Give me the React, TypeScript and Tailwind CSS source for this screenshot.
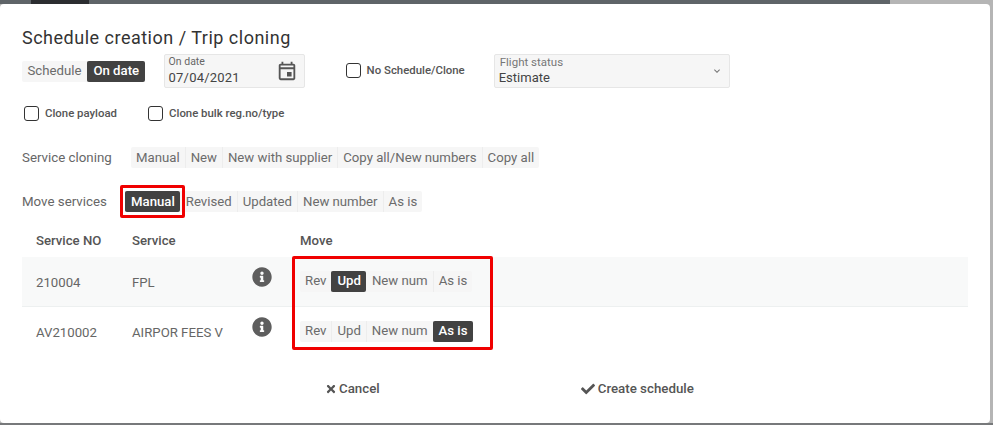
import { FaCheck, FaInfoCircle, FaTimes } from 'react-icons/fa'
import { MdKeyboardArrowDown, MdOutlineEvent } from 'react-icons/md'

type Option = { label: string; active?: boolean; marked?: boolean }

function Segments({ options, className = '', wide }: { options: Option[]; className?: string; wide?: boolean }) {
  return (
    <div className={`flex h-[21px] bg-[#f6f6f6] rounded-[2px] text-[13.2px] text-[#6b6b6b] ${className}`}>
      {options.map((o, i) => (
        <span
          key={o.label}
          className={`relative flex items-center ${wide ? 'px-[5.5px]' : 'px-[5px]'} ${
            o.active
              ? 'border-l bg-[#424242] border-[#424242] text-white font-medium rounded-[2px]'
              : i === 0
                ? ''
                : !options[i - 1].active
                  ? 'border-l border-[#ededed]'
                  : 'border-l border-transparent'
          }`}
        >
          {o.label}
          {o.marked && (
            <span className="absolute left-[-6px] right-[-5px] top-[-6px] bottom-[-6px] border-[3px] border-[#f00000] rounded-[2px]" />
          )}
        </span>
      ))}
    </div>
  )
}

function Check({ label, className = '' }: { label: string; className?: string }) {
  return (
    <label className={`flex items-center gap-[6px] text-[11.4px] font-medium text-[#555] ${className}`}>
      <span className="w-[15px] h-[15px] border border-[#333] rounded-[3px] bg-white" />
      {label}
    </label>
  )
}

const moveOptions = ['Rev', 'Upd', 'New num', 'As is']

const rows = [
  { no: '210004', name: 'FPL', move: 'Upd', tint: 'bg-[#f8f9f9] shadow-[inset_0_-1px_0_#edf0f0]' },
  { no: 'AV210002', name: 'AIRPOR FEES V', move: 'As is', tint: '' },
]

export default function App() {
  return (
    <div
      className="w-[993px] h-[425px] overflow-hidden bg-[#b5b5b5] flex flex-col"
      style={{ fontFamily: 'Roboto, sans-serif' }}
    >
      <div className="h-[4px] flex">
        <div className="w-[31px] bg-[#5f6468]" />
        <div className="w-[58px] bg-[#2b2d30]" />
        <div className="w-[801px] bg-[#5f6468]" />
      </div>
      <div className="w-[990px] h-[419px] bg-white rounded-[4px] pl-[22px] pr-[22px] pt-[23px]">
        <h1 className="text-[18px] leading-[22px] text-[#333] tracking-[0.5px] h-[27px]">
          Schedule creation / Trip cloning
        </h1>

        <div className="flex items-center h-[34px]">
          <Segments
            wide
            options={[{ label: 'Schedule' }, { label: 'On date', active: true }]}
          />
          <div className="ml-[19px] w-[141px] h-[34px] bg-[#f6f6f6] border border-[#e6e6e6] rounded-[2px] flex items-center justify-between pl-[4px] pr-[6px]">
            <div className="flex flex-col">
              <span className="text-[10.5px] leading-[11px] text-[#666]">On date</span>
              <span className="text-[13px] leading-[17px] mt-[2px] tracking-[0.2px] text-[#444]">07/04/2021</span>
            </div>
            <MdOutlineEvent className="text-[#555]" size={22} />
          </div>
          <Check label="No Schedule/Clone" className="ml-[41px]" />
          <div className="ml-[29px] w-[236px] h-[34px] bg-[#f6f6f6] border border-[#e6e6e6] rounded-[2px] flex items-center justify-between pl-[4px] pr-[6px]">
            <div className="flex flex-col">
              <span className="text-[11.5px] leading-[12px] text-[#777] ml-[1px]">Flight status</span>
              <span className="text-[13px] leading-[17px] mt-[1px] text-[#444]">Estimate</span>
            </div>
            <MdKeyboardArrowDown className="text-[#777]" size={12} />
          </div>
        </div>

        <div className="flex mt-[18px] h-[15px] pl-[2px]">
          <Check label="Clone payload" />
          <Check label="Clone bulk reg.no/type" className="ml-[31px]" />
        </div>

        <div className="flex items-center mt-[26px] text-[13.3px] text-[#666]">
          <span className="w-[109px]">Service cloning</span>
          <Segments
            options={[
              { label: 'Manual' },
              { label: 'New' },
              { label: 'New with supplier' },
              { label: 'Copy all/New numbers' },
              { label: 'Copy all' },
            ]}
          />
        </div>

        <div className="flex items-center mt-[23px] text-[13.3px] text-[#666]">
          <span className="w-[103px]">Move services</span>
          <Segments
            options={[
              { label: 'Manual', active: true, marked: true },
              { label: 'Revised' },
              { label: 'Updated' },
              { label: 'New number' },
              { label: 'As is' },
            ]}
          />
        </div>

        <div className="w-[946px] mt-[13px]">
          <div className="grid grid-cols-[96px_168px_1fr] pl-[14px] h-[32px] items-center text-[13.2px] font-medium text-[#555]">
            <span>Service NO</span>
            <span>Service</span>
            <span>Move</span>
          </div>
          <div className="relative">
            {rows.map((r) => (
              <div
                key={r.no}
                className={`grid grid-cols-[96px_120px_48px_1fr] pl-[14px] h-[50px] items-center text-[13.2px] text-[#666] ${r.tint}`}
              >
                <span className="mt-[2px]">{r.no}</span>
                <span className="mt-[2px]">{r.name}</span>
                <FaInfoCircle className="text-[#5e5e5e] mb-[10px]" size={20} />
                <Segments
                  className="w-fit mb-[2px]"
                  options={moveOptions.map((m) => ({ label: m, active: m === r.move }))}
                />
              </div>
            ))}
            <div className="absolute left-[270px] top-[-1px] w-[201px] h-[94px] border-[3px] border-[#f00000] rounded-[2px]" />
          </div>
        </div>

        <div className="flex text-[13.3px] font-medium text-[#555] mt-[22px]">
          <span className="ml-[303px] flex items-center gap-[2px]">
            <FaTimes size={12} />
            Cancel
          </span>
          <span className="ml-[201px] flex items-center gap-[3px]">
            <FaCheck size={14} />
            Create schedule
          </span>
        </div>
      </div>
      <div className="h-[2px] bg-[#77797b]" />
    </div>
  )
}
